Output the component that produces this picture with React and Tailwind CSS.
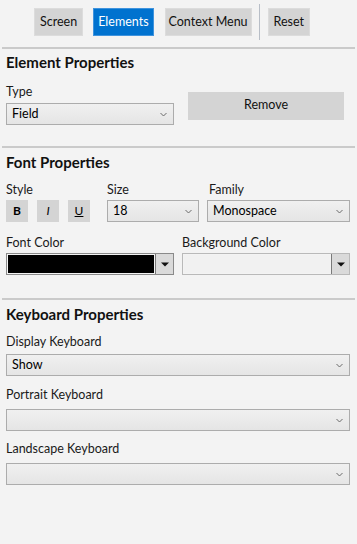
import React from "react";

const font = { fontFamily: "'Segoe UI', Lato, 'Noto Sans', sans-serif" };

function Chevron() {
  return (
    <svg width="7" height="5" viewBox="0 0 7 5" className="shrink-0">
      <path d="M0.5 1 L3.5 4 L6.5 1" fill="none" stroke="#6b6b6b" strokeWidth="1" />
    </svg>
  );
}

function Select({ value, className = "" }) {
  return (
    <div
      className={`h-[22px] border border-[#acacac] bg-gradient-to-b from-[#f0f0f0] to-[#e5e5e5] flex items-center justify-between pl-[5px] pr-[6px] text-[12.5px] text-[#000] ${className}`}
    >
      <span>{value}</span>
      <Chevron />
    </div>
  );
}

function ColorPicker({ color, dark }) {
  return (
    <div className={`h-[22px] flex border ${dark ? "border-[#8a8a8a]" : "border-[#b9b9b9]"}`}>
      <div className="flex-1 p-[1px]">
        <div className="w-full h-full" style={{ background: color }} />
      </div>
      <div className="w-[18px] border-l border-[#7a7a7a] bg-[#dadada] flex items-center justify-center">
        <svg width="8" height="5" viewBox="0 0 8 5">
          <path d="M0 0.5 H8 L4 4.5 Z" fill="#111" />
        </svg>
      </div>
    </div>
  );
}

function Label({ children }) {
  return <div className="text-[12.5px] leading-[16px] text-[#1a1a1a]">{children}</div>;
}

function Heading({ children }) {
  return <div className="text-[15px] leading-[20px] font-bold text-[#111]">{children}</div>;
}

function Divider() {
  return <div className="mx-[2px] h-[2px] bg-[#cacaca]" />;
}

export default function App() {
  return (
    <div className="w-[357px] h-[544px] bg-[#f3f3f3] overflow-hidden" style={font}>
      {/* toolbar */}
      <div className="h-[47px] flex items-center pl-[34px] pb-[3px] text-[12.5px]">
        <button className="h-[28px] px-[5px] bg-[#d4d4d4] border border-[#dcdcdc] text-[#111]">Screen</button>
        <button className="ml-[10px] h-[28px] px-[4px] bg-[#0072cf] border border-[#3f93dd] text-white">Elements</button>
        <button className="ml-[11px] h-[28px] px-[3px] bg-[#d4d4d4] border border-[#dcdcdc] text-[#111]">Context Menu</button>
        <div className="ml-[7px] w-[1px] h-[36px] bg-[#b8bec7]" />
        <button className="ml-[8px] h-[28px] px-[5px] bg-[#d4d4d4] border border-[#dcdcdc] text-[#111]">Reset</button>
      </div>
      <Divider />

      {/* element properties */}
      <div className="px-[6px] pt-[3px] h-[97px]">
        <Heading>Element Properties</Heading>
        <div className="flex items-center mt-[12px]">
          <div className="w-[168px]">
            <Label>Type</Label>
            <div className="mt-[3px]">
              <Select value="Field" />
            </div>
          </div>
          <button className="ml-[14px] w-[156px] h-[28px] bg-[#d4d4d4] text-[12.5px] text-[#111] mt-[2px]">Remove</button>
        </div>
      </div>
      <Divider />

      {/* font properties */}
      <div className="px-[6px] pt-[4px] h-[150px]">
        <Heading>Font Properties</Heading>
        <div className="flex mt-[10px]">
          <div className="w-[101px]">
            <Label>Style</Label>
            <div className="flex gap-[9px] mt-[2px]">
              <div className="w-[22px] h-[22px] bg-[#d4d4d4] flex items-center justify-center text-[12px] font-bold">B</div>
              <div className="w-[22px] h-[22px] bg-[#d4d4d4] flex items-center justify-center text-[12px] italic">I</div>
              <div className="w-[22px] h-[22px] bg-[#d4d4d4] flex items-center justify-center text-[12px] underline">U</div>
            </div>
          </div>
          <div className="w-[92px]">
            <Label>Size</Label>
            <div className="mt-[2px]">
              <Select value="18" />
            </div>
          </div>
          <div className="ml-[8px] flex-1 pr-[1px]">
            <div className="pl-[2px]">
              <Label>Family</Label>
            </div>
            <div className="mt-[2px]">
              <Select value="Monospace" />
            </div>
          </div>
        </div>
        <div className="flex mt-[13px]">
          <div className="w-[168px]">
            <Label>Font Color</Label>
            <div className="mt-[2px]">
              <ColorPicker color="#000" dark />
            </div>
          </div>
          <div className="ml-[8px] flex-1 pr-[1px]">
            <Label>Background Color</Label>
            <div className="mt-[2px]">
              <ColorPicker color="#f1f1f1" />
            </div>
          </div>
        </div>
      </div>
      <Divider />

      {/* keyboard properties */}
      <div className="px-[6px] pt-[4px] pr-[7px]">
        <Heading>Keyboard Properties</Heading>
        <div className="mt-[10px]">
          <Label>Display Keyboard</Label>
          <div className="mt-[4px]">
            <Select value="Show" />
          </div>
        </div>
        <div className="mt-[11px]">
          <Label>Portrait Keyboard</Label>
          <div className="mt-[6px]">
            <Select value="" />
          </div>
        </div>
        <div className="mt-[10px]">
          <Label>Landscape Keyboard</Label>
          <div className="mt-[6px]">
            <Select value="" />
          </div>
        </div>
      </div>
    </div>
  );
}
